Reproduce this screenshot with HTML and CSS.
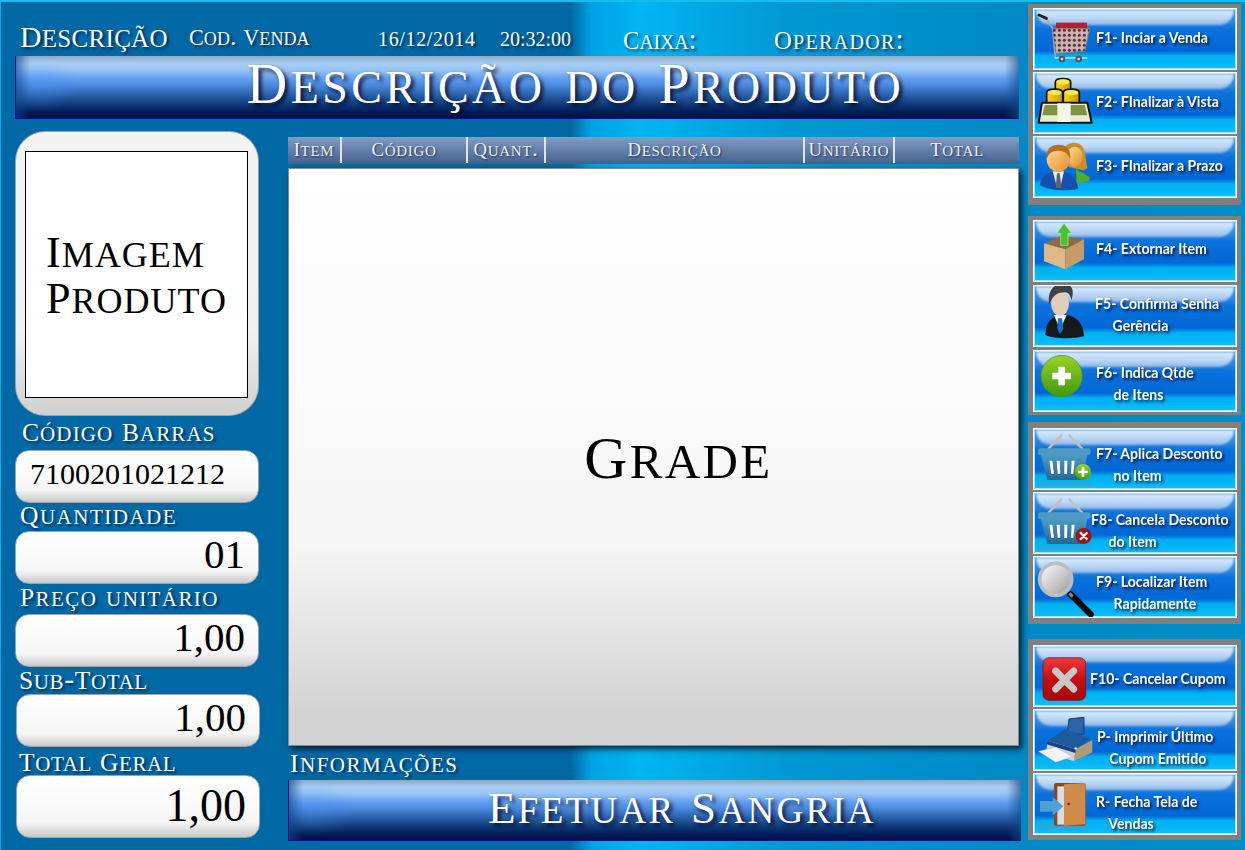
FILE: index.html
```html
<!DOCTYPE html>
<html lang="pt">
<head>
<meta charset="utf-8">
<title>Frente de Caixa</title>
<link rel="stylesheet" href="styles.css">
</head>
<body>
<div class="screen">
  <main class="main">
    <header class="topline">
      <span class="t-desc"><i>D</i>escrição</span>
      <span class="t-cod"><i>C</i>od. <i>V</i>enda</span>
      <span class="t-date">16/12/2014</span>
      <span class="t-time">20:32:00</span>
      <span class="t-caixa"><i>C</i>aixa:</span>
      <span class="t-oper"><i>O</i>perador:</span>
    </header>
    <div class="banner banner-top"><span><i>D</i>escrição do <i>P</i>roduto</span></div>
    <div class="body">
      <aside class="left">
        <div class="photo"><div class="photo-inner"><i>I</i>magem<br><i>P</i>roduto</div></div>
        <div class="lbl lbl-1"><i>C</i>ódigo <i>B</i>arras</div>
        <div class="field f-bar">7100201021212</div>
        <div class="lbl lbl-2"><i>Q</i>uantidade</div>
        <div class="field">01</div>
        <div class="lbl lbl-3"><i>P</i>reço unitário</div>
        <div class="field">1,00</div>
        <div class="lbl lbl-4"><i>S</i>ub-<i>T</i>otal</div>
        <div class="field f-shift">1,00</div>
        <div class="lbl lbl-5"><i>T</i>otal <i>G</i>eral</div>
        <div class="field f-shift f-total">1,00</div>
      </aside>
      <section class="center">
        <div class="cols">
          <span><i>I</i>tem</span><span><i>C</i>ódigo</span><span><i>Q</i>uant.</span><span><i>D</i>escrição</span><span><i>U</i>nitário</span><span><i>T</i>otal</span>
        </div>
        <div class="grade"><span><i>G</i>rade</span></div>
        <div class="info"><i>I</i>nformações</div>
        <div class="banner banner-bottom"><span><i>E</i>fetuar <i>S</i>angria</span></div>
      </section>
    </div>
  </main>
  <nav class="side">
    <svg class="defs" width="0" height="0" aria-hidden="true">
      <defs>
        <linearGradient id="gGreen" x1="0" y1="0" x2="0" y2="1"><stop offset="0" stop-color="#9ad12a"/><stop offset="1" stop-color="#3f9a0c"/></linearGradient>
        <linearGradient id="gRed" x1="0" y1="0" x2="0" y2="1"><stop offset="0" stop-color="#ee3b3b"/><stop offset=".5" stop-color="#c40f0f"/><stop offset="1" stop-color="#a80808"/></linearGradient>
        <linearGradient id="gSkin" x1="0" y1="0" x2="1" y2="1"><stop offset="0" stop-color="#fde0a0"/><stop offset="1" stop-color="#e88a20"/></linearGradient>
        <linearGradient id="gGlass" x1="0" y1="0" x2="1" y2="1"><stop offset="0" stop-color="#fff"/><stop offset="1" stop-color="#9a9a9a"/></linearGradient>
        <linearGradient id="gBody" x1="0" y1="0" x2="0" y2="1"><stop offset="0" stop-color="#4c9cc6"/><stop offset="1" stop-color="#26688f"/></linearGradient>
        <linearGradient id="gCoin" x1="0" y1="0" x2="1" y2="0"><stop offset="0" stop-color="#f7d81e"/><stop offset="1" stop-color="#c79a08"/></linearGradient>
        <pattern id="pMesh" width="15" height="15" patternUnits="userSpaceOnUse"><circle cx="7" cy="7" r="4.5" fill="#7a2028"/></pattern>
        <symbol id="basket" viewBox="0 0 198 186">
          <path d="M50 62 88 22M112 22 150 62" stroke="#c6c0b8" stroke-width="7" stroke-linecap="round" fill="none"/>
          <rect x="16" y="168" width="165" height="6" fill="#7a8c9c" opacity=".7"/>
          <path d="M26 80H166L150 156H46Z" fill="url(#gBody)"/>
          <rect x="18" y="61" width="158" height="20" rx="6" fill="#4f9ac4"/>
          <path d="M52 98h9l5 40h-8zM74 98h9l2 40h-8zM97 98h9l-1 40h-8zM119 98h9l-4 40h-7z" fill="#fff"/>
        </symbol>
      </defs>
    </svg>

    <div class="group g1">
      <div class="btn">
        <svg class="ico" viewBox="0 0 198 186"><path d="M42 30 62 62 70 150" stroke="#a8a8a8" stroke-width="5" fill="none"/><path d="M21 21 43 31" stroke="#222" stroke-width="9" stroke-linecap="round"/><path d="M72 44h93v20H72z" fill="#b82028"/><path d="M62 62H173L158 130 72 136Z" fill="#bdb7b5" stroke="#8b8585" stroke-width="3"/><path d="M62 62H173L158 130 72 136Z" fill="url(#pMesh)"/><path d="M68 150H166" stroke="#d8d8d8" stroke-width="5"/><circle cx="90" cy="153" r="10" fill="#555"/><circle cx="90" cy="153" r="4" fill="#ddd"/><circle cx="140" cy="153" r="10" fill="#555"/><circle cx="140" cy="153" r="4" fill="#ddd"/></svg>
        <div class="txt up2"><span>F1- Inciar a Venda</span></div>
      </div>
      <div class="btn">
        <svg class="ico" viewBox="0 0 198 186"><g stroke="#111" stroke-width="5" fill="url(#gCoin)"><path d="M70 30c0-14 46-14 46 0v40H70Z"/><path d="M44 62c0-14 48-14 48 0v34H44Z"/><path d="M94 62c0-14 48-14 48 0v34H94Z"/></g><ellipse cx="93" cy="30" rx="19" ry="8" fill="#ffe84e"/><ellipse cx="68" cy="62" rx="20" ry="8" fill="#ffe84e"/><ellipse cx="118" cy="62" rx="20" ry="8" fill="#ffe84e"/><path d="M30 92H166L179 152H20Z" fill="#e9edd2" stroke="#111" stroke-width="6" stroke-linejoin="round"/><path d="M38 99H158L166 130H31Z" fill="#7f9440"/><rect x="76" y="94" width="40" height="56" fill="#f4f6ea"/></svg>
        <div class="txt up2"><span>F2- FInalizar à Vista</span></div>
      </div>
      <div class="btn">
        <svg class="ico" viewBox="0 0 198 186"><path d="M96 45C96 16 148 8 158 45c4 20 6 40 8 52l-12 6-44-10Z" fill="#c9902d"/><ellipse cx="128" cy="62" rx="24" ry="30" fill="url(#gSkin)"/><path d="M132 100l42 24-4 12-36 6Z" fill="#4cae2a"/><path d="M24 148c2-30 24-40 55-42 32 2 54 14 60 52-30 8-85 8-115-10Z" fill="#1650ae"/><path d="M62 106h34l-10 44h-12Z" fill="#e6eef5"/><path d="M75 112h8l6 44h-18Z" fill="#5a6470"/><ellipse cx="79" cy="70" rx="35" ry="38" fill="url(#gSkin)"/><path d="M44 70c-4-34 16-44 36-44 22 0 38 12 34 42-6-16-18-24-34-24-20 0-30 8-36 26Z" fill="#b4701c"/></svg>
        <div class="txt up2"><span>F3- FInalizar a Prazo</span></div>
      </div>
    </div>

    <div class="group g2">
      <div class="btn">
        <svg class="ico" viewBox="0 0 198 186"><path d="M36 70 86 48 156 58 100 88Z" fill="#8d6c42"/><path d="M96 10 74 40H86V76H108V40H119Z" fill="#4cc22a" stroke="#b8f0a0" stroke-width="2"/><path d="M36 70 100 88V148L36 124Z" fill="#dcb987"/><path d="M100 88 156 58V118L100 148Z" fill="#c59c68"/></svg>
        <div class="txt up3"><span>F4- Extornar Item</span></div>
      </div>
      <div class="btn">
        <svg class="ico" viewBox="0 0 198 186"><path d="M40 150c0-40 22-56 42-60h24c24 4 48 22 50 64-34 8-90 8-116-4Z" fill="#16181c"/><path d="M66 90h38L84 134Z" fill="#f0f2f4"/><path d="M78 100h12l4 32-10 16-8-16Z" fill="#1372c8"/><ellipse cx="84" cy="56" rx="27" ry="36" fill="#e3cdb6"/><path d="M52 60C44 16 68 -4 92 -4c24 0 38 14 26 50-2-14-8-24-20-24-18 0-38 8-46 38Z" fill="#3e4044"/></svg>
        <div class="txt t-5 up2"><span>F5- Confirma Senha</span><span class="in">Gerência</span></div>
      </div>
      <div class="btn">
        <svg class="ico" viewBox="0 0 198 186"><circle cx="89" cy="78" r="62" fill="url(#gGreen)" stroke="#4a8c10" stroke-width="2"/><path d="M79 50h20v18h18v20H99v18H79V88H61V68h18Z" fill="#fff"/></svg>
        <div class="txt dn2"><span>F6- Indica Qtde</span><span class="in">de Itens</span></div>
      </div>
    </div>

    <div class="group g3">
      <div class="btn">
        <svg class="ico" viewBox="0 0 198 186"><use href="#basket"/><circle cx="153" cy="132" r="24" fill="url(#gGreen)"/><path d="M149 118h8v10h10v8h-10v10h-8v-10h-10v-8h10Z" fill="#fff"/></svg>
        <div class="txt dn5"><span>F7- Aplica Desconto</span><span class="in">no Item</span></div>
      </div>
      <div class="btn">
        <svg class="ico" viewBox="0 0 198 186"><use href="#basket"/><circle cx="155" cy="132" r="24" fill="#9e1414"/><path d="M146 123 164 141M164 123 146 141" stroke="#fff" stroke-width="7" stroke-linecap="round"/></svg>
        <div class="txt t-8 dn7"><span>F8- Cancela Desconto</span><span class="in">do Item</span></div>
      </div>
      <div class="btn">
        <svg class="ico" viewBox="0 0 198 186"><path d="M116 115 176 175" stroke="#0a0a0a" stroke-width="19" stroke-linecap="round"/><path d="M112 112 122 122" stroke="#888" stroke-width="9"/><circle cx="71" cy="70" r="48" fill="url(#gGlass)" stroke="#bdbdbd" stroke-width="11"/></svg>
        <div class="txt dn5"><span>F9- Localizar Item</span><span class="in">Rapidamente</span></div>
      </div>
    </div>

    <div class="group g4">
      <div class="btn">
        <svg class="ico" viewBox="0 0 198 186"><rect x="33" y="38" width="128" height="128" rx="18" fill="url(#gRed)" stroke="#7c0606" stroke-width="2"/><path d="M71 78 125 132M125 78 71 132" stroke="#c8c8c8" stroke-width="21" stroke-linecap="round"/></svg>
        <div class="txt t-10 dn2"><span>F10- Cancelar Cupom</span></div>
      </div>
      <div class="btn">
        <svg class="ico" viewBox="0 0 198 186"><path d="M111 30 156 25 156 75 106 75Z" fill="#2a66a8" stroke="#123a6e" stroke-width="3"/><path d="M46 95 101 60 176 90 131 120Z" fill="#1d5a9e"/><path d="M131 120 181 93 181 130 126 157Z" fill="#b09a78"/><path d="M46 95 131 120 126 157 43 130Z" fill="#c9d2da"/><path d="M46 95 131 120 130 132 44 106Z" fill="#14447e"/><path d="M19 127 71 115 121 143 71 160Z" fill="#f4f4f4" stroke="#aaa"/><circle cx="131" cy="118" r="3.5" fill="#dcecff"/></svg>
        <div class="txt t-p dn7"><span>P- Imprimir Último</span><span class="in in-p">Cupom Emitido</span></div>
      </div>
      <div class="btn">
        <svg class="ico" viewBox="0 0 198 186"><rect x="66" y="30" width="95" height="128" rx="6" fill="#8a4a20"/><rect x="76" y="40" width="24" height="115" fill="#d9dde0"/><path d="M96 34 160 30V154L96 158Z" fill="#d08a4a"/><circle cx="110" cy="93" r="3.5" fill="#6a1010"/><path d="M24 84H62V72L94 100 62 128V116H24Z" fill="#4f9fd0"/><rect x="20" y="160" width="146" height="4" fill="#7a8c9c"/></svg>
        <div class="txt t-r dn8"><span>R- Fecha Tela de</span><span class="in">Vendas</span></div>
      </div>
    </div>
  </nav>
</div>
</body>
</html>
```
FILE: styles.css
```css
* { box-sizing: border-box; }
html, body { margin: 0; padding: 0; }
body { width: 1245px; height: 850px; overflow: hidden; }
i { font-style: normal; font-size: .85em; }

.screen {
  width: 1245px;
  height: 850px;
  display: flex;
  overflow: hidden;
  border-top: 2px solid #12bdf2;
  border-left: 1px solid #12a8e6;
  background: linear-gradient(90deg, #0069a5 0, #0069a5 570px, #00a2e2 590px, #00b5f1 640px, #0099d5 780px, #0089c5 1020px, #008ec6 1245px);
  font-family: "Liberation Serif", serif;
  color: #fff;
  font-variant: small-caps;
}

.main { width: 1027px; flex: none; padding-left: 14px; }

/* top labels */
.topline {
  height: 54px;
  display: grid;
  grid-template-columns: 169px 189px 122px 123px 151px 1fr;
  padding-left: 5px;
  white-space: nowrap;
  text-shadow: 2px 2px 3px rgba(0, 20, 60, .8);
}
.t-desc { margin-top: 16px; font-size: 35px; line-height: 36px; letter-spacing: .3px; }
.t-cod { margin-top: 19px; font-size: 26px; line-height: 32px; letter-spacing: .1px; }
.t-date { margin-top: 26px; font-size: 20px; line-height: 22px; letter-spacing: .65px; }
.t-time { margin-top: 26px; font-size: 20px; line-height: 22px; }
.t-caixa { margin-top: 21px; font-size: 29px; line-height: 32px; letter-spacing: -.2px; }
.t-oper { margin-top: 21px; font-size: 29px; line-height: 32px; letter-spacing: 1.3px; }

/* banners */
.banner {
  display: flex;
  align-items: center;
  justify-content: center;
  border-left: 1px solid #00118a;
  border-bottom: 1px solid #00118a;
  background:
    linear-gradient(90deg, rgba(20, 70, 140, .65), rgba(20, 70, 140, 0) 14px),
    linear-gradient(270deg, rgba(20, 70, 140, .65), rgba(20, 70, 140, 0) 14px),
    radial-gradient(ellipse 40px 26px at 24px 30px, rgba(70, 140, 240, .4), rgba(70, 140, 240, 0)),
    linear-gradient(180deg, #8ea9c4 0, #a6cdf4 12%, #9ac6f6 22%, #5e9cf0 38%, #4a88dc 48%, #2f68b2 60%, #123f7e 76%, #001d58 90%, #000f4a 100%);
  text-shadow: 3px 3px 4px rgba(0, 0, 30, .85);
  white-space: nowrap;
}
.banner span { display: block; }
.banner-top { width: 1004px; height: 63px; font-size: 66px; letter-spacing: 3.4px; padding-left: 116px; }
.banner-top span { height: 56px; line-height: 50px; margin-bottom: 7px; }
.banner-bottom { width: 733px; height: 61px; font-size: 53px; letter-spacing: 2.3px; padding-left: 54px; }
.banner-bottom span { height: 54px; line-height: 50px; margin-bottom: 6px; }

.body { display: flex; gap: 28px; }

/* left column */
.left { width: 245px; flex: none; padding-top: 12px; }
.photo {
  width: 244px;
  height: 285px;
  padding: 19px 10px 17px 9px;
  border-radius: 30px;
  background: linear-gradient(180deg, #f3f3f3 0, #f1f1f1 70%, #d0d0d0 100%);
  border: 1px solid #9aa4ac;
}
.photo-inner {
  height: 100%;
  background: #fff;
  border: 1px solid #000;
  color: #000;
  padding-top: 76px;
  padding-left: 20px;
  font-size: 52px;
  line-height: 43px;
  letter-spacing: 1px;
}
.lbl {
  font-size: 30px;
  line-height: 22px;
  letter-spacing: .6px;
  text-shadow: 2px 2px 3px rgba(0, 20, 60, .8);
  white-space: nowrap;
}
.lbl-1 { height: 34px; padding: 4px 0 0 7px; letter-spacing: 1.1px; }
.lbl-2 { height: 28px; padding: 0 0 0 5px; letter-spacing: 1.5px; }
.lbl-3 { height: 30px; padding: 1px 0 0 5px; letter-spacing: 1.4px; }
.lbl-4 { height: 27px; padding: 1px 0 0 4px; }
.lbl-5 { height: 28px; padding: 3px 0 0 4px; }
.field {
  width: 244px;
  height: 53px;
  border: 1px solid #9aa6ae;
  border-radius: 14px;
  background: linear-gradient(180deg, #fff 0, #f6f6f6 76%, #c8c8c8 100%);
  color: #000;
  font-variant: normal;
  font-size: 41px;
  line-height: 44px;
  text-align: right;
  padding-right: 13px;
}
.f-bar { font-size: 30px; text-align: left; padding-left: 14px; line-height: 46px; }
.f-shift { margin-left: 1px; }
.f-total { height: 63px; font-size: 46px; line-height: 60px; }

/* centre */
.center { width: 733px; flex: none; padding-top: 18px; }
.cols {
  width: 731px;
  height: 27px;
  display: grid;
  grid-template-columns: 54px 126px 78px 259px 90px 124px;
  background: linear-gradient(180deg, #7f9dc5 0, #44618d 100%);
  font-size: 22px;
  line-height: 24px;
  text-align: center;
  color: #eef2f6;
  letter-spacing: .7px;
  white-space: nowrap;
  text-shadow: 1px 1px 2px rgba(0, 20, 60, .7);
}
.cols span { border-right: 2px solid #dfe4ea; margin: 0 0 1px; }
.cols span:last-child { border-right: 0; }
.grade {
  width: 731px;
  height: 578px;
  margin-top: 4px;
  border: 1px solid #8a8a8a;
  background: linear-gradient(180deg, #fff 0, #f6f6f6 65%, #d2d2d2 95%);
  box-shadow: 3px 3px 6px rgba(0, 15, 40, .85);
  color: #000;
  display: flex;
  align-items: center;
  justify-content: center;
  font-size: 70px;
  letter-spacing: 2.4px;
  padding: 0 0 4px 50px;
}
.info {
  height: 34px;
  padding: 4px 0 0 2px;
  font-size: 30px;
  line-height: 24px;
  letter-spacing: 1.5px;
  white-space: nowrap;
  text-shadow: 2px 2px 3px rgba(0, 20, 60, .8);
}

/* right column */
.side { width: 217px; flex: none; }
.defs { display: block; position: absolute; }
.group {
  width: 213px;
  padding: 4px 4px 7px 5px;
  background: #808080;
  display: flex;
  flex-direction: column;
  gap: 2px;
}
.g1 { margin-top: 2px; }
.g2 { margin-top: 11px; gap: 3px; padding-bottom: 3px; }
.g3 { margin-top: 7px; padding-top: 6px; padding-bottom: 6px; }
.g4 { margin-top: 15px; padding-top: 6px; padding-bottom: 5px; }
.btn {
  position: relative;
  height: 62px;
  display: flex;
  align-items: center;
  border: 1px solid #f6fcff;
  box-shadow: inset 0 0 0 1px #9fe4ff;
  background: linear-gradient(180deg, #3b90e4 0, #2b84e0 22%, #0a72dc 34%, #0068d6 70%, #00b0f2 78%, #00b6f6 88%, #18bdf6 100%);
  overflow: hidden;
}
.btn::before {
  content: "";
  position: absolute;
  left: 2px;
  right: 2px;
  top: 1px;
  height: 15px;
  border-radius: 0 0 18px 18px;
  filter: blur(1px);
  background: linear-gradient(180deg, #d9ecff 0, #b6d4f4 60%, #8db8ea 100%);
}
.ico { position: relative; flex: none; width: 66px; height: 62px; margin-left: -2px; }
.txt {
  position: relative;
  margin-left: -2px;
  display: flex;
  flex-direction: column;
  font-family: "Lato", "Liberation Sans", sans-serif;
  font-variant: normal;
  font-weight: 700;
  font-size: 16px;
  line-height: 22px;
  color: #fff;
  white-space: nowrap;
  transform: scaleX(.88);
  transform-origin: left center;
  text-shadow: 2px 2px 3px rgba(0, 10, 50, .9);
}
.in { padding-left: 20px; }
.in-p { padding-left: 14px; }
.t-5 { margin-left: -3px; }
.t-8 { margin-left: -7px; }
.t-10 { margin-left: -8px; }
.t-p { margin-left: -1px; }
.t-r { margin-left: -2px; }
.t-r .in { padding-left: 14px; }
.up2 { padding-bottom: 4px; }
.up3 { padding-bottom: 6px; }
.dn2 { padding-top: 4px; }
.dn5 { padding-top: 10px; }
.dn7 { padding-top: 14px; }
.dn8 { padding-top: 16px; }
```
